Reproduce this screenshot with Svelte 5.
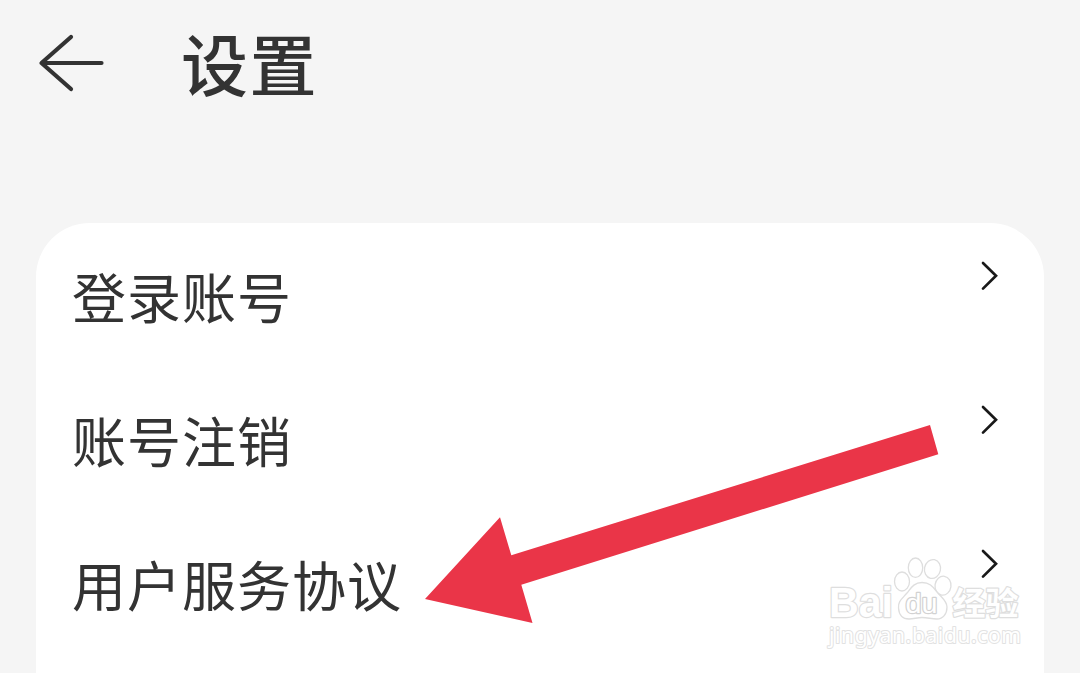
<script>
  const items = ['登录账号', '账号注销', '用户服务协议'];
</script>

<main class="screen">
  <header>
    <svg class="back" width="68" height="60" viewBox="0 0 68 60" aria-label="返回">
      <path d="M34 4 4.500 30 34 56M5 30H64.500" />
    </svg>
    <h1>设置</h1>
  </header>

  <section class="card">
    {#each items as item}
      <div class="row">
        <span>{item}</span>
        <svg class="chevron" width="20" height="32" viewBox="0 0 20 32">
          <path d="M3 3 16 15.800 3 28.600" />
        </svg>
      </div>
    {/each}
  </section>

  <svg class="overlay" width="1080" height="673" viewBox="0 0 1080 673">
    <polygon
      points="425,599 500,517.3 511.3,555.3 930,425 938.3,454.3 521.3,584.7 532.5,623"
      fill="#ea3548"
    />
    <g class="mark">
      <ellipse cx="902" cy="581.5" rx="7.5" ry="9.5" />
      <ellipse cx="915.5" cy="567.7" rx="7.2" ry="9.7" />
      <ellipse cx="932.5" cy="569" rx="8" ry="9.5" transform="rotate(12 932.5 569)" />
      <ellipse cx="943" cy="585.7" rx="8" ry="9.5" transform="rotate(8 943 585.7)" />
      <path
        d="M922 582.5C914 582.5 911 588 907 593C902 599 898 601 898.5 608C899 615 903 619 909 619C914 619 917 617.5 922 617.5C928 617.5 931 619 937 619C943 619 947 614 947 607C947 601 942 598 937 592C933 587 930 582.5 922 582.5Z"
      />
      <text class="latin" x="829" y="617" font-size="42" textLength="64" lengthAdjust="spacingAndGlyphs">Bai</text>
      <text class="latin du" x="905.5" y="612.5" font-size="27" textLength="32" lengthAdjust="spacingAndGlyphs">du</text>
      <text class="cjk" x="952.5" y="614.5" font-size="32" textLength="66" lengthAdjust="spacingAndGlyphs">经验</text>
      <text class="url" x="829" y="643" font-size="21" textLength="192" lengthAdjust="spacing">jingyan.baidu.com</text>
    </g>
  </svg>
</main>

<style>
  :global(body) {
    margin: 0;
  }
  .screen {
    position: relative;
    box-sizing: border-box;
    width: 1080px;
    height: 673px;
    overflow: hidden;
    padding: 0 36px;
    background: #f5f5f5;
    color: #333;
    font-family: "Noto Sans CJK SC", sans-serif;
  }
  header {
    display: flex;
    height: 223px;
  }
  .back {
    margin: 33px 0 0 1px;
    flex: none;
  }
  .back path {
    fill: none;
    stroke: #333;
    stroke-width: 4.2;
    stroke-linecap: round;
    stroke-linejoin: round;
  }
  h1 {
    margin: 12px 0 0 76px;
    font-size: 67px;
    letter-spacing: 1.5px;
    line-height: 100px;
    font-weight: 500;
  }
  .card {
    height: 520px;
    border-radius: 54px;
    background: #fff;
  }
  .row {
    display: flex;
    justify-content: space-between;
    height: 144px;
    padding: 0 44px 0 36px;
  }
  .row span {
    margin-top: 33px;
    font-size: 54px;
    letter-spacing: 1px;
    line-height: 80px;
  }
  .chevron {
    margin-top: 37px;
  }
  .chevron path {
    fill: none;
    stroke: #191919;
    stroke-width: 2.7;
    stroke-linecap: round;
    stroke-linejoin: miter;
  }
  .overlay {
    position: absolute;
    inset: 0;
    pointer-events: none;
  }
  .mark {
    fill: #fff;
    stroke: #dedede;
    stroke-width: 1.3;
  }
  .mark text {
    paint-order: stroke;
    stroke-width: 2.4;
    stroke-linejoin: round;
  }
  .latin {
    font-family: "Liberation Sans", sans-serif;
    font-weight: 700;
  }
  .mark .du {
    font-weight: 400;
    stroke: #d2d2d2;
  }
  .cjk {
    font-weight: 700;
  }
  .mark .url {
    font-family: "Noto Sans", sans-serif;
    stroke: #e2e2e2;
    stroke-width: 2;
  }
</style>
